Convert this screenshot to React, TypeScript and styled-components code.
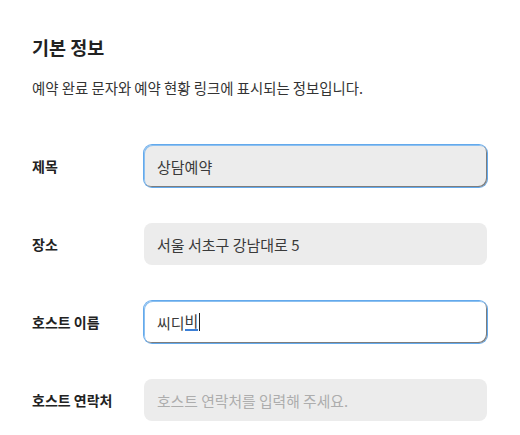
import React from "react";
import styled, { createGlobalStyle, css } from "styled-components";

const Global = createGlobalStyle`
  html, body { margin: 0; padding: 0; background: #fff; }
  body { font-family: "Noto Sans CJK KR", "Noto Sans", sans-serif; color: #222; }
`;

const Page = styled.div`
  padding: 34px 33px 0 32px;
  width: 520px;
  box-sizing: border-box;
`;

const Title = styled.h2`
  margin: 0;
  font-size: 18.5px;
  line-height: 26px;
  font-weight: 700;
  color: #222;
`;

const Desc = styled.p`
  margin: 17px 0 0;
  font-size: 14.4px;
  line-height: 22px;
  color: #333;
`;

const Form = styled.div`
  margin-top: 46px;
  display: flex;
  flex-direction: column;
  gap: 36px;
`;

const Row = styled.div`
  display: grid;
  grid-template-columns: 112px 1fr;
  align-items: center;
`;

const Label = styled.span`
  font-size: 14px;
  font-weight: 700;
  color: #222;
`;

const Field = styled.div<{ $focus?: boolean; $white?: boolean }>`
  height: 42px;
  box-sizing: border-box;
  border-radius: 8px;
  background: ${(p) => (p.$white ? "#fff" : "#ececec")};
  padding: 0 13px;
  display: flex;
  align-items: center;
  font-size: 15px;
  color: #3a3a3a;
  ${(p) =>
    p.$focus &&
    css`
      box-shadow: 0 0 0 1px #63a9ec, inset -1px -1px 0 #7d7d7d, inset 1px 1px 0 #8cc0f0;
    `}
`;

const Placeholder = styled.span`
  color: #adadad;
  font-size: 14.8px;
`;

const Composing = styled.span`
  border-bottom: 2px solid #3c7fd6;
  line-height: 16px;
`;

const Caret = styled.span`
  display: inline-block;
  width: 1px;
  height: 18px;
  background: #222;
  margin-left: 1px;
`;

export default function App() {
  return (
    <>
      <Global />
      <Page>
        <Title>기본 정보</Title>
        <Desc>예약 완료 문자와 예약 현황 링크에 표시되는 정보입니다.</Desc>
        <Form>
          <Row>
            <Label>제목</Label>
            <Field $focus>상담예약</Field>
          </Row>
          <Row>
            <Label>장소</Label>
            <Field>서울 서초구 강남대로 5</Field>
          </Row>
          <Row>
            <Label>호스트 이름</Label>
            <Field $focus $white>
              씨디<Composing>비</Composing>
              <Caret />
            </Field>
          </Row>
          <Row>
            <Label>호스트 연락처</Label>
            <Field>
              <Placeholder>호스트 연락처를 입력해 주세요.</Placeholder>
            </Field>
          </Row>
        </Form>
      </Page>
    </>
  );
}
